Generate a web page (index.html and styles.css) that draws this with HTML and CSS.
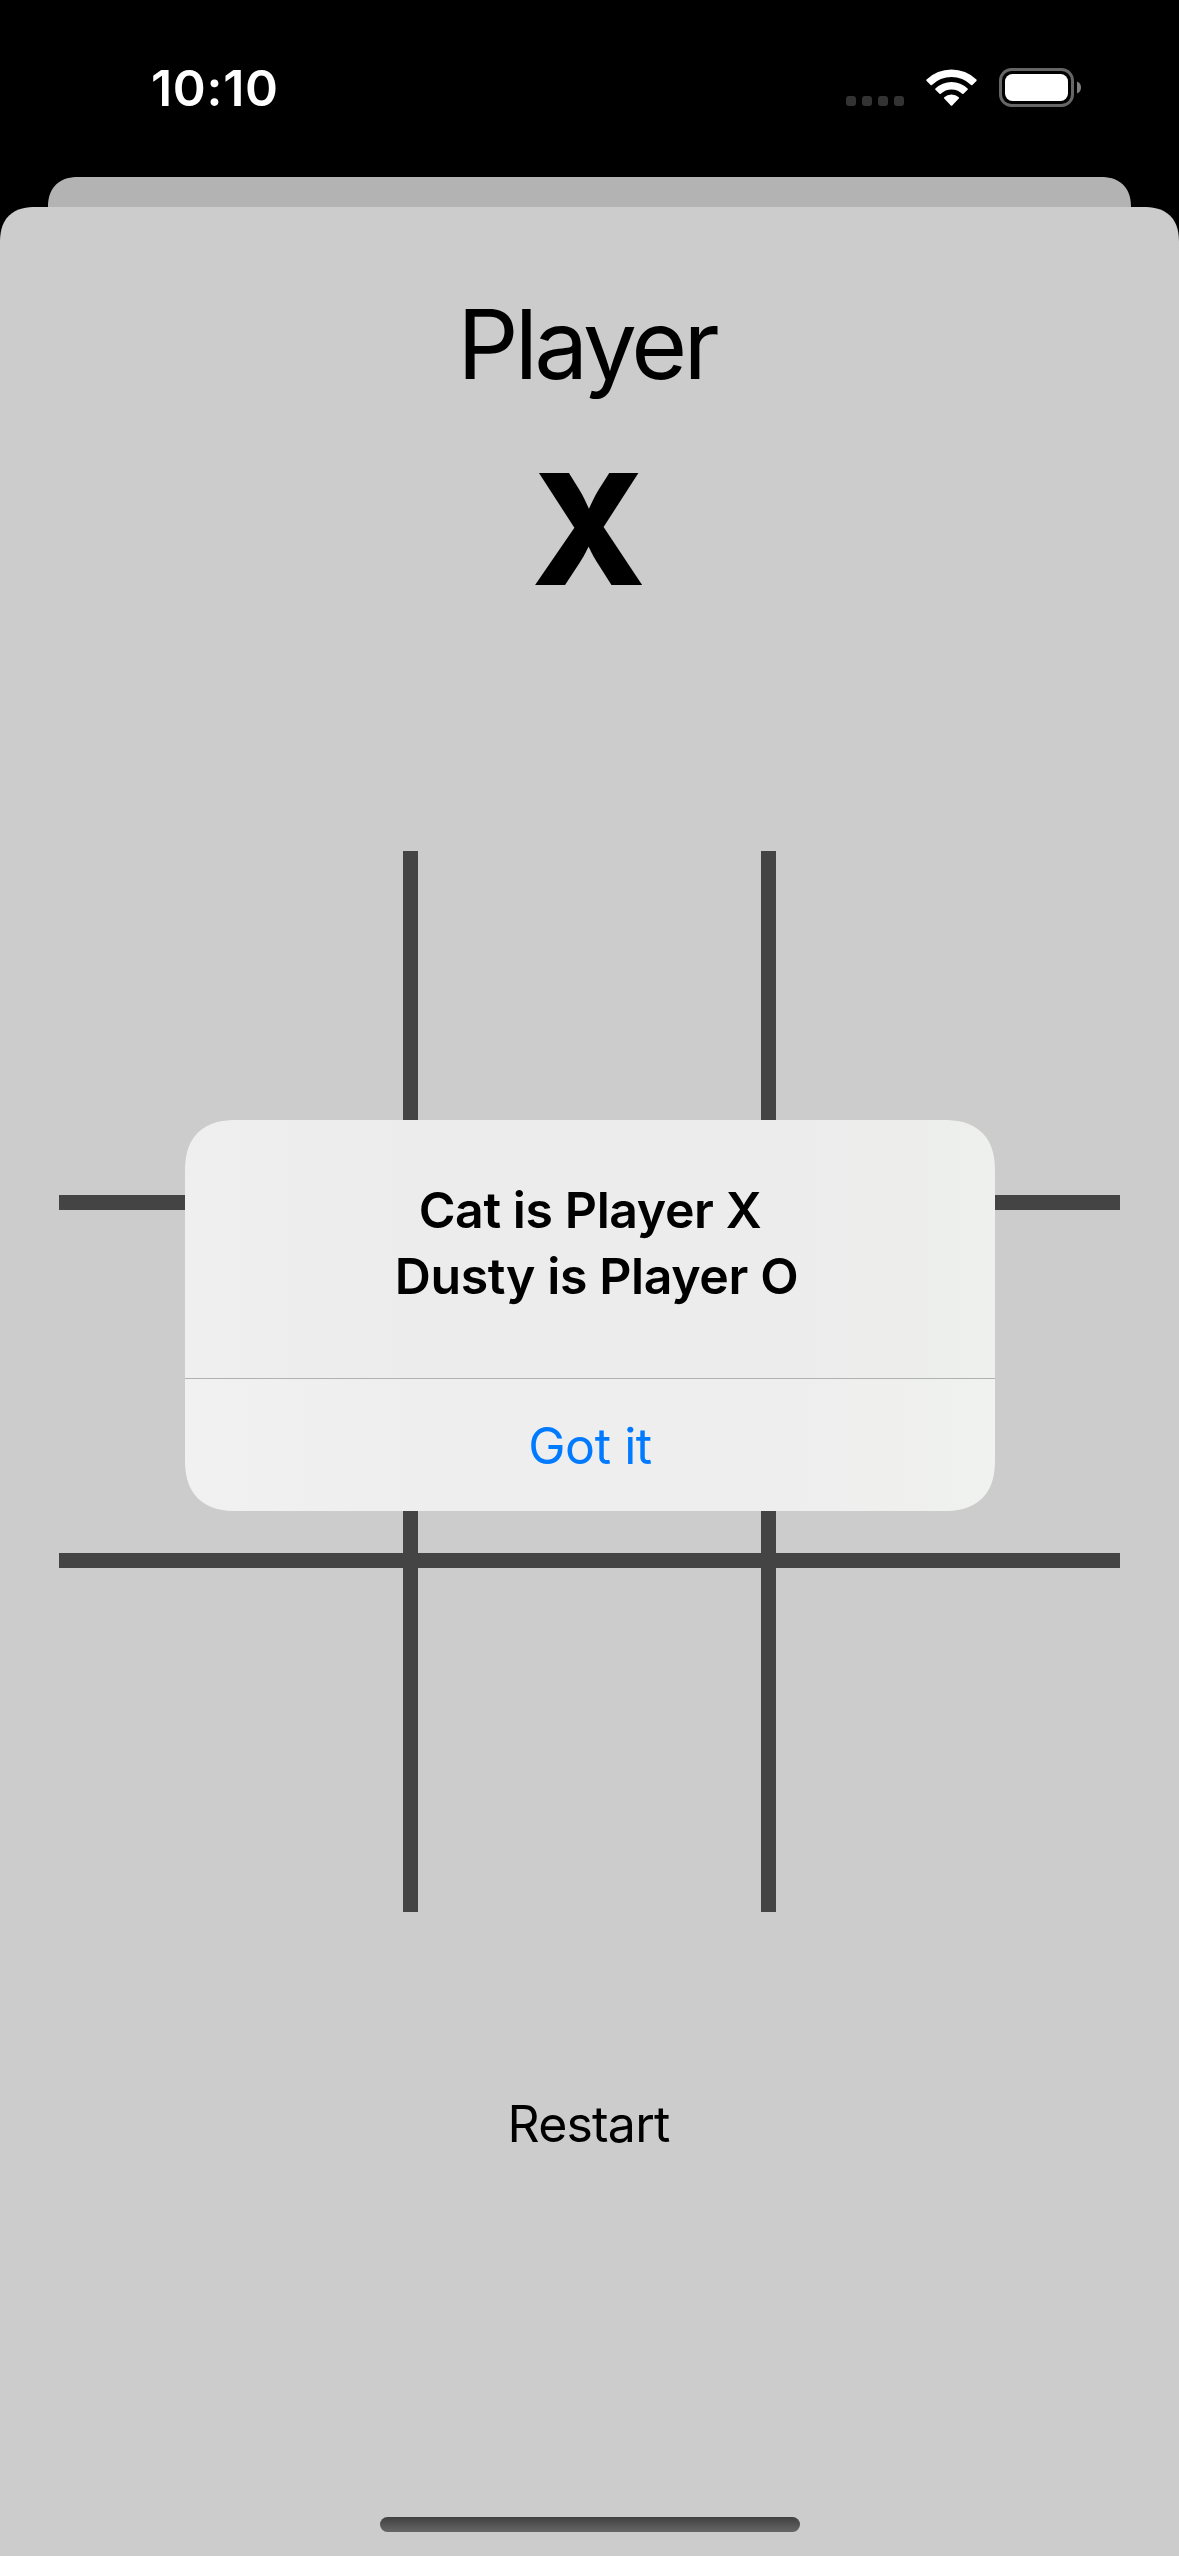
FILE: index.html
```html
<!DOCTYPE html>
<html lang="en">
<head>
<meta charset="utf-8">
<title>Tic Tac Toe</title>
<link rel="stylesheet" href="styles.css">
</head>
<body>
<div class="screen">
  <header class="status">
    <div class="time">10:10</div>
    <div class="indicators">
      <div class="cell-dots"><i></i><i></i><i></i><i></i></div>
      <svg class="wifi" width="51" height="38" viewBox="0 0 51 38">
        <g fill="#fff">
          <path d="M.6 10.6Q0 11.3.6 12L4.6 16Q5.2 16.5 5.9 15.9A28.2 28.2 0 0 1 45.1 15.9Q45.8 16.5 46.4 16L50.4 12Q51 11.3 50.4 10.6A35.6 35.6 0 0 0 .6 10.6Z"/>
          <path d="M9.4 19.4Q8.8 20.1 9.4 20.8L13.5 24.8Q14.1 25.4 14.8 24.8A15.6 15.6 0 0 1 36.2 24.8Q36.9 25.4 37.5 24.8L41.6 20.8Q42.2 20.1 41.6 19.4A23.4 23.4 0 0 0 9.4 19.4Z"/>
          <path d="M18.2 28.3Q17.6 29 18.2 29.6L24.8 36.4Q25.5 37.1 26.2 36.4L32.8 29.6Q33.4 29 32.8 28.3A10.6 10.6 0 0 0 18.2 28.3Z"/>
        </g>
      </svg>
      <svg class="battery" width="83" height="39" viewBox="0 0 83 39">
        <rect x="1.5" y="1.5" width="72" height="36" rx="11" fill="none" stroke="#666" stroke-width="3"/>
        <rect x="6" y="6" width="63" height="27" rx="7.5" fill="#fff"/>
        <path d="M78 13.5Q82 15.2 82 19.5Q82 23.8 78 25.5Z" fill="#808080"/>
      </svg>
    </div>
  </header>
  <div class="back-sheet"></div>
  <main class="sheet">
    <h1 class="label">Player</h1>
    <div class="mark">X</div>
    <div class="board">
      <span></span><span></span><span></span>
      <span></span><span></span><span></span>
      <span></span><span></span><span></span>
    </div>
    <button class="restart">Restart</button>
    <div class="home-bar"></div>
  </main>
  <div class="alert" role="alertdialog">
    <div class="message">
      <p class="first">Cat is Player X</p>
      <p class="second">Dusty is Player O</p>
    </div>
    <button class="confirm">Got it</button>
  </div>
</div>
</body>
</html>
```

FILE: styles.css
```css
* { box-sizing: border-box; margin: 0; padding: 0; }

body {
  background: #000;
  color: #000;
  font-family: Inter, "Liberation Sans", sans-serif;
}

button {
  border: 0;
  background: none;
  font-family: inherit;
}

.screen {
  position: relative;
  display: flex;
  flex-direction: column;
  width: 1179px;
  height: 2556px;
  overflow: hidden;
  background: #000;
}

.status {
  display: flex;
  justify-content: space-between;
  height: 177px;
  padding: 68px 97px 0 151px;
}

.time {
  color: #fff;
  font-size: 50px;
  font-weight: 600;
  line-height: 40px;
  letter-spacing: .7px;
}

.indicators { display: flex; align-items: flex-start; }

.cell-dots { display: flex; gap: 6px; padding-top: 28px; }
.cell-dots i { width: 10px; height: 10px; border-radius: 3px; background: #333; }

.wifi { margin: 1px 0 0 22px; }
.battery { margin-left: 22px; }

.back-sheet {
  height: 30px;
  margin: 0 48px;
  border-radius: 29px 29px 0 0;
  background: #b3b3b3;
}

.sheet {
  flex: 1;
  display: flex;
  flex-direction: column;
  align-items: center;
  border-radius: 31px 31px 0 0;
  background: #ccc;
}

.label {
  margin-top: 77px;
  padding-right: 6px;
  font-size: 96px;
  font-weight: 400;
  line-height: 120px;
  letter-spacing: -3.8px;
}

.mark {
  margin-top: 32px;
  padding-right: 2px;
  font-size: 154px;
  font-weight: 800;
  line-height: 186px;
  transform: scaleX(.975);
}

.board {
  display: grid;
  grid-template: 344px 343px 344px / 344px 343px 344px;
  gap: 15px;
  margin-top: 229px;
  background: #444;
}
.board span { background: #ccc; }

.restart {
  margin-top: 182px;
  padding-right: 2px;
  font-size: 50px;
  line-height: 60px;
  letter-spacing: -.8px;
}

.home-bar {
  width: 420px;
  height: 15px;
  margin-top: auto;
  margin-bottom: 24px;
  border-radius: 8px;
  background: linear-gradient(#404040, #666);
}

.alert {
  position: absolute;
  left: 185px;
  top: 1120px;
  width: 810px;
  height: 391px;
  display: flex;
  flex-direction: column;
  overflow: hidden;
  border-radius: 42px;
  background: linear-gradient(90deg, #eeefee, #ececec 30%, #ececec 75%, #eef0ed);
}

.message {
  height: 258px;
  padding-top: 57px;
  text-align: center;
  font-size: 50px;
  font-weight: 600;
  line-height: 66px;
  letter-spacing: -.4px;
}

.second {
  padding-left: 13px;
  letter-spacing: -.4px;
}

.confirm {
  flex: 1;
  padding-top: 2px;
  border-top: 1px solid #b0b2b1;
  color: #007aff;
  font-size: 50px;
  letter-spacing: -.45px;
  background: rgba(255, 255, 255, .15);
}

/* Continuous corners where the browser can draw them */
@supports (corner-shape: superellipse(1.3)) {
  .alert { border-radius: 52px; corner-shape: superellipse(1.3); }
  .back-sheet { border-radius: 30px 30px 0 0; corner-shape: superellipse(1.2); }
  .sheet { border-radius: 36px 36px 0 0; corner-shape: superellipse(1.3); }
}
```
